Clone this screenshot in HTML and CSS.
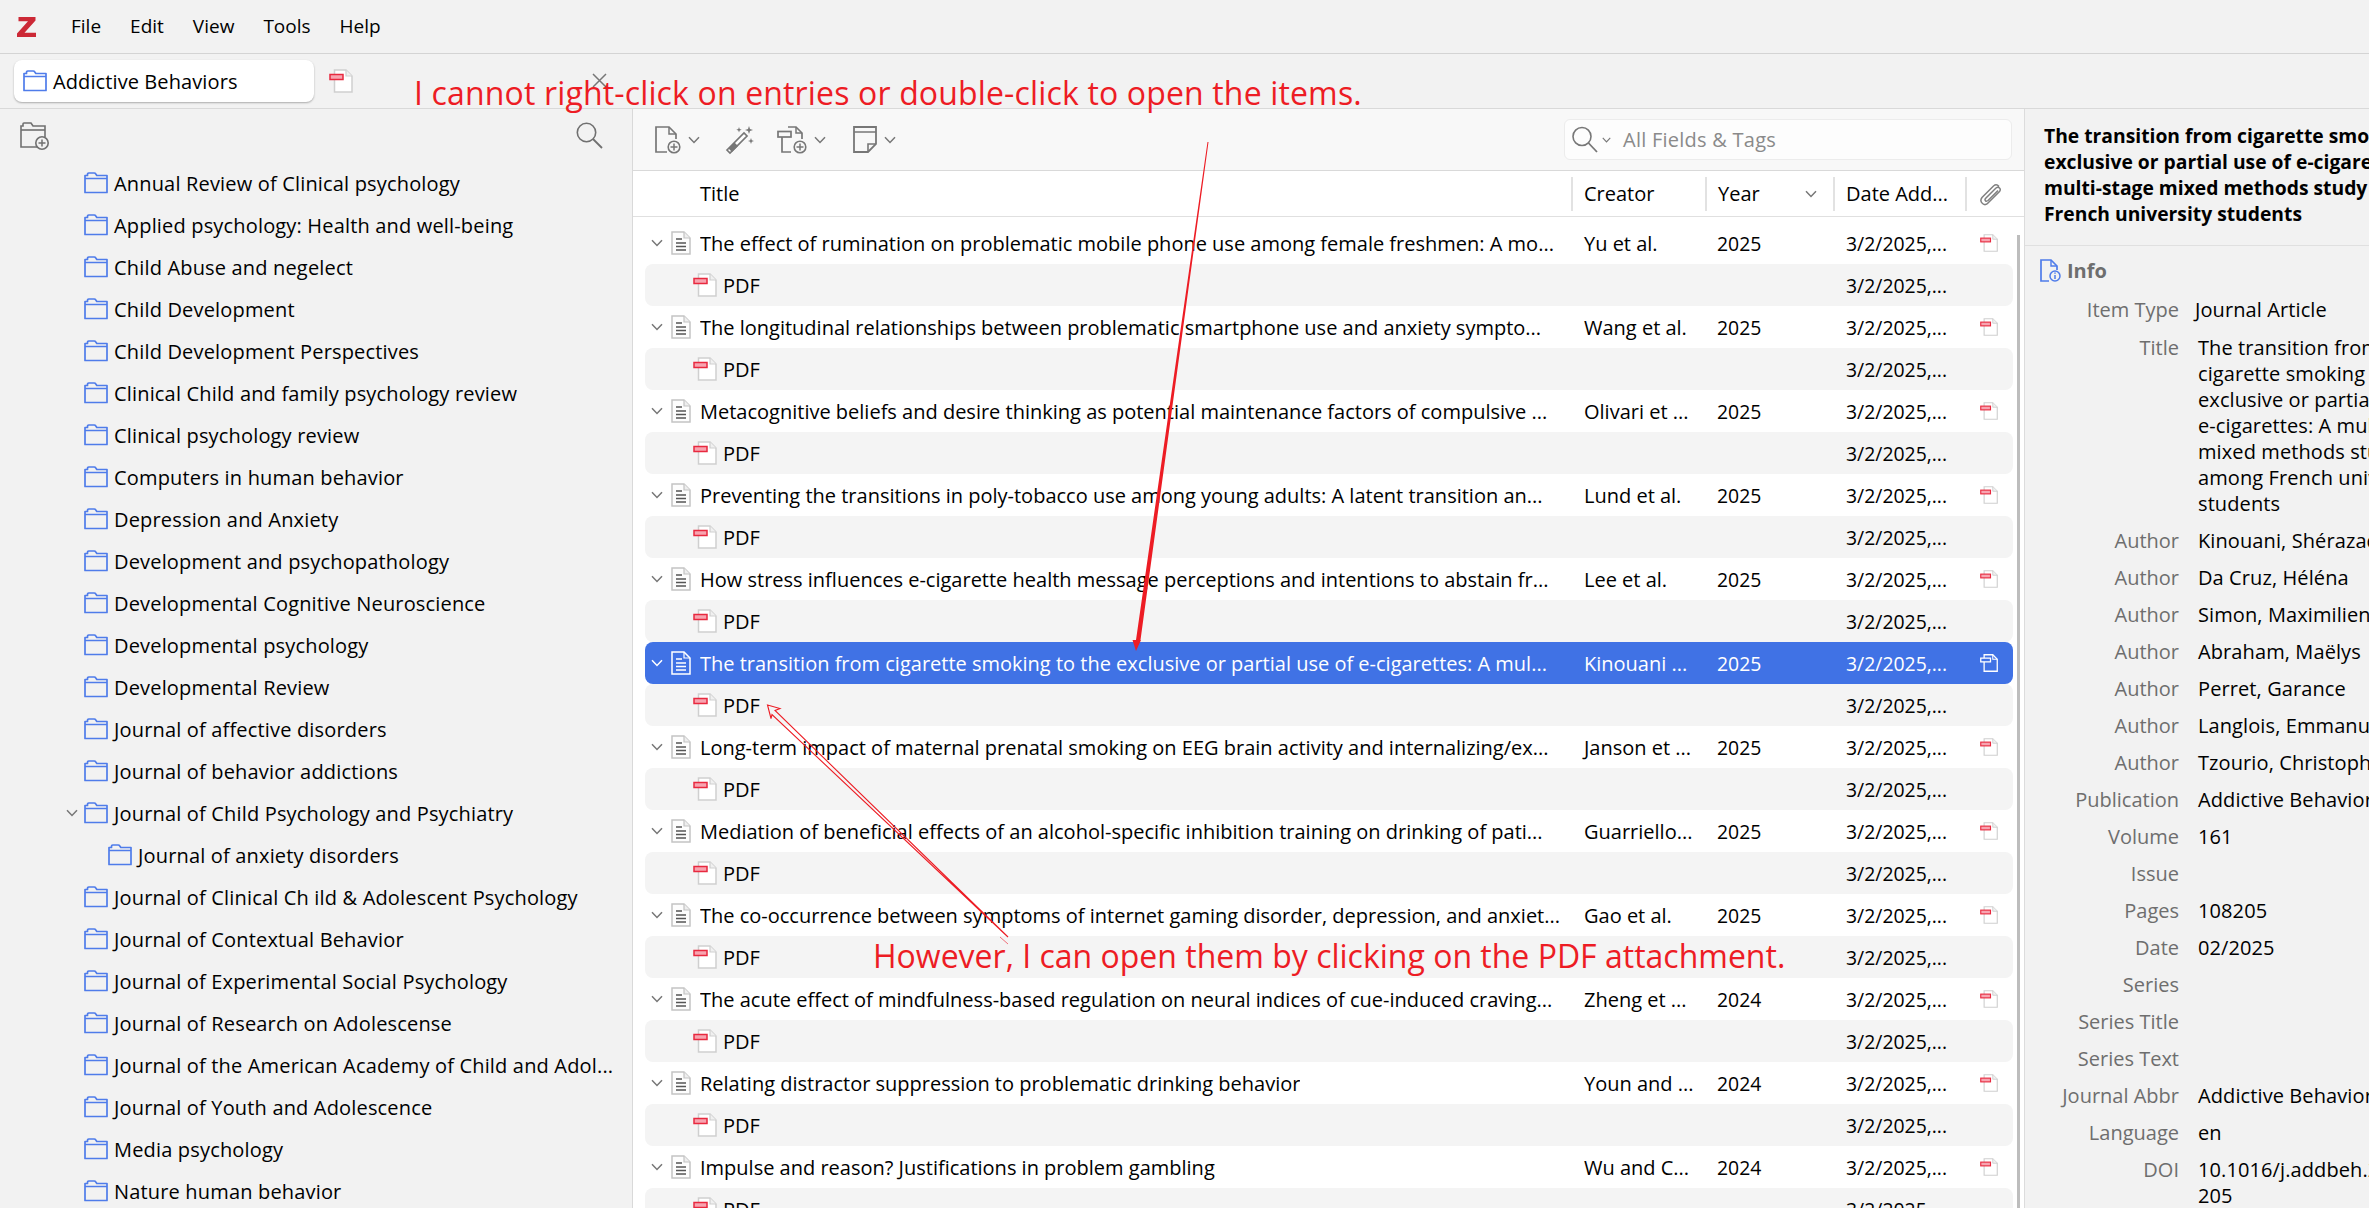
FILE: index.html
```html
<!DOCTYPE html>
<html lang="en">
<head>
<meta charset="utf-8">
<title>Zotero</title>
<link rel="stylesheet" href="styles.css">
</head>
<body>
<svg class="defs" width="0" height="0" aria-hidden="true">
  <symbol id="folder" viewBox="0 0 24 22"><path d="M1 20.5V3.5h2.5V2.2Q3.5 1 4.8 1h5.4Q11.2 1 11.8 2l1 1.500H23V20.500Z M1 6.500H23" fill="none" stroke="#4f7cea" stroke-width="1.700" stroke-linejoin="round"/></symbol>
  <symbol id="doc" viewBox="0 0 20 24"><path d="M1 1H13L19 7V23H1Z" fill="#fdfdfd" stroke="#c4c4c4" stroke-width="1.500"/><path d="M13 1V7H19" fill="#eee" stroke="#c4c4c4" stroke-width="1.200"/><path d="M5 8H11M5 12H15M5 15.500H15M5 19H15" stroke="#555" stroke-width="1.400"/></symbol>
  <symbol id="docw" viewBox="0 0 20 24"><path d="M1 1H13L19 7V23H1Z" fill="none" stroke="#fff" stroke-width="1.500"/><path d="M13 1V7H19" fill="none" stroke="#fff" stroke-width="1.200"/><path d="M5 8H11M5 12H15M5 15.500H15M5 19H15" stroke="#fff" stroke-width="1.400"/></symbol>
  <symbol id="pdf" viewBox="0 0 24 24"><path d="M5.500 1H17L23 7V23H5.500Z" fill="#fff" stroke="#cfcfcf" stroke-width="1.500"/><path d="M17 1V7H23" fill="#f0f0f0" stroke="#cfcfcf" stroke-width="1.200"/><rect x="1" y="5.500" width="13" height="5" fill="#f7a4b0" stroke="#e8293f" stroke-width="1.500"/></symbol>
  <symbol id="pdfw" viewBox="0 0 24 24"><path d="M5.500 1H17L23 7V23H5.500Z" fill="none" stroke="#fff" stroke-width="1.700"/><path d="M17 1V7H23" fill="none" stroke="#fff" stroke-width="1.400"/><rect x="1" y="5.500" width="13" height="5" fill="#4072e5" stroke="#fff" stroke-width="1.700"/></symbol>
  <symbol id="chev" viewBox="0 0 12 8"><path d="M1 1.200 6 6.500 11 1.200" fill="none" stroke="#777" stroke-width="1.500"/></symbol>
  <symbol id="chevw" viewBox="0 0 12 8"><path d="M1 1.200 6 6.500 11 1.200" fill="none" stroke="#fff" stroke-width="1.500"/></symbol>
</svg>

<header class="menubar">
  <svg class="logo" viewBox="0 0 19 20"><path d="M1.500 0H18.500V3.500L7.500 15.800H19V20H0V16.500L11 4.200H1.500Z" fill="#cc2936"/></svg>
  <nav class="menu"><span>File</span><span>Edit</span><span>View</span><span>Tools</span><span>Help</span></nav>
</header>

<div class="tabbar">
  <div class="tab"><svg class="i-folder"><use href="#folder"/></svg><span>Addictive Behaviors</span></div>
  <svg class="i-pdf"><use href="#pdf"/></svg>
</div>

<div class="workspace">
  <aside class="sidebar">
    <div class="side-tools">
      <svg class="i-tool" viewBox="0 0 29 28"><path d="M20 25H1V4h2V2q0-1 1-1h7l2 3h12v11" fill="none" stroke="#707070" stroke-width="1.600"/><path d="M1 8H25" stroke="#707070" stroke-width="1.600"/><circle cx="22" cy="21" r="6.200" fill="#f2f2f2" stroke="#707070" stroke-width="1.600"/><path d="M22 17.500v7M18.500 21h7" stroke="#707070" stroke-width="1.500"/></svg>
      <svg class="i-search" viewBox="0 0 27 27"><circle cx="10.500" cy="10.500" r="9.200" fill="none" stroke="#707070" stroke-width="1.600"/><path d="M17 17 26 26" stroke="#707070" stroke-width="1.800"/></svg>
    </div>
    <ul class="tree">
      <li class="node"><svg class="i-folder"><use href="#folder"/></svg><span>Annual Review of Clinical psychology</span></li>
      <li class="node"><svg class="i-folder"><use href="#folder"/></svg><span>Applied psychology: Health and well-being</span></li>
      <li class="node"><svg class="i-folder"><use href="#folder"/></svg><span>Child Abuse and negelect</span></li>
      <li class="node"><svg class="i-folder"><use href="#folder"/></svg><span>Child Development</span></li>
      <li class="node"><svg class="i-folder"><use href="#folder"/></svg><span>Child Development Perspectives</span></li>
      <li class="node"><svg class="i-folder"><use href="#folder"/></svg><span>Clinical Child and family psychology review</span></li>
      <li class="node"><svg class="i-folder"><use href="#folder"/></svg><span>Clinical psychology review</span></li>
      <li class="node"><svg class="i-folder"><use href="#folder"/></svg><span>Computers in human behavior</span></li>
      <li class="node"><svg class="i-folder"><use href="#folder"/></svg><span>Depression and Anxiety</span></li>
      <li class="node"><svg class="i-folder"><use href="#folder"/></svg><span>Development and psychopathology</span></li>
      <li class="node"><svg class="i-folder"><use href="#folder"/></svg><span>Developmental Cognitive Neuroscience</span></li>
      <li class="node"><svg class="i-folder"><use href="#folder"/></svg><span>Developmental psychology</span></li>
      <li class="node"><svg class="i-folder"><use href="#folder"/></svg><span>Developmental Review</span></li>
      <li class="node"><svg class="i-folder"><use href="#folder"/></svg><span>Journal of affective disorders</span></li>
      <li class="node"><svg class="i-folder"><use href="#folder"/></svg><span>Journal of behavior addictions</span></li>
      <li class="node open"><svg class="i-twisty"><use href="#chev"/></svg><svg class="i-folder"><use href="#folder"/></svg><span>Journal of Child Psychology and Psychiatry</span></li>
      <li class="node child"><svg class="i-folder"><use href="#folder"/></svg><span>Journal of anxiety disorders</span></li>
      <li class="node"><svg class="i-folder"><use href="#folder"/></svg><span>Journal of Clinical Ch ild &amp; Adolescent Psychology</span></li>
      <li class="node"><svg class="i-folder"><use href="#folder"/></svg><span>Journal of Contextual Behavior</span></li>
      <li class="node"><svg class="i-folder"><use href="#folder"/></svg><span>Journal of Experimental Social Psychology</span></li>
      <li class="node"><svg class="i-folder"><use href="#folder"/></svg><span>Journal of Research on Adolescense</span></li>
      <li class="node"><svg class="i-folder"><use href="#folder"/></svg><span>Journal of the American Academy of Child and Adol...</span></li>
      <li class="node"><svg class="i-folder"><use href="#folder"/></svg><span>Journal of Youth and Adolescence</span></li>
      <li class="node"><svg class="i-folder"><use href="#folder"/></svg><span>Media psychology</span></li>
      <li class="node"><svg class="i-folder"><use href="#folder"/></svg><span>Nature human behavior</span></li>
    </ul>
  </aside>

  <main class="items">
    <div class="toolbar">
      <svg class="i-tb" viewBox="0 0 26 28"><path d="M12 26H1V1H14L21 8V13" fill="none" stroke="#777" stroke-width="1.700"/><path d="M14 1V8H21" fill="none" stroke="#777" stroke-width="1.500"/><circle cx="19" cy="21" r="5.800" fill="#f8f8f8" stroke="#777" stroke-width="1.600"/><path d="M19 17.500v7M15.500 21h7" stroke="#777" stroke-width="1.500"/></svg>
      <svg class="i-chev"><use href="#chev"/></svg>
      <svg class="i-wand" viewBox="0 0 30 30"><path d="M2 25 19 8l3 3L5 28Z" fill="#fff" stroke="#777" stroke-width="1.700"/><path d="M3.500 23.500 7 27 13 21 9.500 17.500Z" fill="#777"/><path d="M24 1l1 3 3 1-3 1-1 3-1-3-3-1 3-1ZM14 2l.7 2 2 .7-2 .7-.7 2-.7-2-2-.7 2-.7ZM26 13l.8 2.200 2.200.8-2.200.8-.8 2.200-.8-2.200-2.200-.8 2.200-.8Z" fill="#777"/></svg>
      <svg class="i-tb attach" viewBox="0 0 30 28"><path d="M14 26H5V9M11 1H19L25 7V13" fill="none" stroke="#777" stroke-width="1.700"/><path d="M19 1V7H25" fill="none" stroke="#777" stroke-width="1.500"/><rect x="1" y="5.500" width="13" height="5.500" fill="#f8f8f8" stroke="#777" stroke-width="1.700"/><circle cx="23" cy="21" r="5.800" fill="#f8f8f8" stroke="#777" stroke-width="1.600"/><path d="M23 17.500v7M19.500 21h7" stroke="#777" stroke-width="1.500"/></svg>
      <svg class="i-chev"><use href="#chev"/></svg>
      <svg class="i-tb note" viewBox="0 0 24 27"><path d="M1 1H23V18L15 26H1Z" fill="none" stroke="#777" stroke-width="1.800"/><path d="M1 6H23M15 26V18H23" fill="none" stroke="#777" stroke-width="1.600"/></svg>
      <svg class="i-chev"><use href="#chev"/></svg>
      <div class="searchbox">
        <svg class="i-lens" viewBox="0 0 26 27"><circle cx="10" cy="10.500" r="9" fill="none" stroke="#777" stroke-width="1.600"/><path d="M16.500 17 25 26" stroke="#777" stroke-width="1.800"/></svg>
        <svg class="i-mini"><use href="#chev"/></svg>
        <span>All Fields &amp; Tags</span>
      </div>
    </div>

    <div class="thead">
      <div class="th th-title">Title</div>
      <div class="th th-creator">Creator</div>
      <div class="th th-year">Year<svg class="i-chev sort"><use href="#chev"/></svg></div>
      <div class="th th-date">Date Add...</div>
      <div class="th th-clip"><svg class="i-clip" viewBox="0 0 24 24"><path d="M20 4.500Q17.500 1.500 14.500 4L3 15.500Q.5 19 3.500 21.500T9 21L20.500 9.500Q22 7.500 20.500 6T17 6L6.500 16.500Q5.500 18 6.500 18.800T9 18.500L19 8.500" fill="none" stroke="#808080" stroke-width="1.500"/></svg></div>
    </div>

    <div class="rows">
      <div class="row"><div class="c-title"><svg class="i-twisty"><use href="#chev"/></svg><svg class="i-doc"><use href="#doc"/></svg><span class="clip">The effect of rumination on problematic mobile phone use among female freshmen: A mo...</span></div><div>Yu et al.</div><div>2025</div><div>3/2/2025,...</div><svg class="i-att"><use href="#pdf"/></svg></div>
      <div class="row sub"><div class="c-title"><svg class="i-pdf"><use href="#pdf"/></svg><span>PDF</span></div><div></div><div></div><div>3/2/2025,...</div></div>
      <div class="row"><div class="c-title"><svg class="i-twisty"><use href="#chev"/></svg><svg class="i-doc"><use href="#doc"/></svg><span class="clip">The longitudinal relationships between problematic smartphone use and anxiety sympto...</span></div><div>Wang et al.</div><div>2025</div><div>3/2/2025,...</div><svg class="i-att"><use href="#pdf"/></svg></div>
      <div class="row sub"><div class="c-title"><svg class="i-pdf"><use href="#pdf"/></svg><span>PDF</span></div><div></div><div></div><div>3/2/2025,...</div></div>
      <div class="row"><div class="c-title"><svg class="i-twisty"><use href="#chev"/></svg><svg class="i-doc"><use href="#doc"/></svg><span class="clip">Metacognitive beliefs and desire thinking as potential maintenance factors of compulsive ...</span></div><div>Olivari et ...</div><div>2025</div><div>3/2/2025,...</div><svg class="i-att"><use href="#pdf"/></svg></div>
      <div class="row sub"><div class="c-title"><svg class="i-pdf"><use href="#pdf"/></svg><span>PDF</span></div><div></div><div></div><div>3/2/2025,...</div></div>
      <div class="row"><div class="c-title"><svg class="i-twisty"><use href="#chev"/></svg><svg class="i-doc"><use href="#doc"/></svg><span class="clip">Preventing the transitions in poly-tobacco use among young adults: A latent transition an...</span></div><div>Lund et al.</div><div>2025</div><div>3/2/2025,...</div><svg class="i-att"><use href="#pdf"/></svg></div>
      <div class="row sub"><div class="c-title"><svg class="i-pdf"><use href="#pdf"/></svg><span>PDF</span></div><div></div><div></div><div>3/2/2025,...</div></div>
      <div class="row"><div class="c-title"><svg class="i-twisty"><use href="#chev"/></svg><svg class="i-doc"><use href="#doc"/></svg><span class="clip">How stress influences e-cigarette health message perceptions and intentions to abstain fr...</span></div><div>Lee et al.</div><div>2025</div><div>3/2/2025,...</div><svg class="i-att"><use href="#pdf"/></svg></div>
      <div class="row sub"><div class="c-title"><svg class="i-pdf"><use href="#pdf"/></svg><span>PDF</span></div><div></div><div></div><div>3/2/2025,...</div></div>
      <div class="row selected"><div class="c-title"><svg class="i-twisty"><use href="#chevw"/></svg><svg class="i-doc"><use href="#docw"/></svg><span class="clip">The transition from cigarette smoking to the exclusive or partial use of e-cigarettes: A mul...</span></div><div>Kinouani ...</div><div>2025</div><div>3/2/2025,...</div><svg class="i-att"><use href="#pdfw"/></svg></div>
      <div class="row sub"><div class="c-title"><svg class="i-pdf"><use href="#pdf"/></svg><span>PDF</span></div><div></div><div></div><div>3/2/2025,...</div></div>
      <div class="row"><div class="c-title"><svg class="i-twisty"><use href="#chev"/></svg><svg class="i-doc"><use href="#doc"/></svg><span class="clip">Long-term impact of maternal prenatal smoking on EEG brain activity and internalizing/ex...</span></div><div>Janson et ...</div><div>2025</div><div>3/2/2025,...</div><svg class="i-att"><use href="#pdf"/></svg></div>
      <div class="row sub"><div class="c-title"><svg class="i-pdf"><use href="#pdf"/></svg><span>PDF</span></div><div></div><div></div><div>3/2/2025,...</div></div>
      <div class="row"><div class="c-title"><svg class="i-twisty"><use href="#chev"/></svg><svg class="i-doc"><use href="#doc"/></svg><span class="clip">Mediation of beneficial effects of an alcohol-specific inhibition training on drinking of pati...</span></div><div>Guarriello...</div><div>2025</div><div>3/2/2025,...</div><svg class="i-att"><use href="#pdf"/></svg></div>
      <div class="row sub"><div class="c-title"><svg class="i-pdf"><use href="#pdf"/></svg><span>PDF</span></div><div></div><div></div><div>3/2/2025,...</div></div>
      <div class="row"><div class="c-title"><svg class="i-twisty"><use href="#chev"/></svg><svg class="i-doc"><use href="#doc"/></svg><span class="clip">The co-occurrence between symptoms of internet gaming disorder, depression, and anxiet...</span></div><div>Gao et al.</div><div>2025</div><div>3/2/2025,...</div><svg class="i-att"><use href="#pdf"/></svg></div>
      <div class="row sub"><div class="c-title"><svg class="i-pdf"><use href="#pdf"/></svg><span>PDF</span></div><div></div><div></div><div>3/2/2025,...</div></div>
      <div class="row"><div class="c-title"><svg class="i-twisty"><use href="#chev"/></svg><svg class="i-doc"><use href="#doc"/></svg><span class="clip">The acute effect of mindfulness-based regulation on neural indices of cue-induced craving...</span></div><div>Zheng et ...</div><div>2024</div><div>3/2/2025,...</div><svg class="i-att"><use href="#pdf"/></svg></div>
      <div class="row sub"><div class="c-title"><svg class="i-pdf"><use href="#pdf"/></svg><span>PDF</span></div><div></div><div></div><div>3/2/2025,...</div></div>
      <div class="row"><div class="c-title"><svg class="i-twisty"><use href="#chev"/></svg><svg class="i-doc"><use href="#doc"/></svg><span class="clip">Relating distractor suppression to problematic drinking behavior</span></div><div>Youn and ...</div><div>2024</div><div>3/2/2025,...</div><svg class="i-att"><use href="#pdf"/></svg></div>
      <div class="row sub"><div class="c-title"><svg class="i-pdf"><use href="#pdf"/></svg><span>PDF</span></div><div></div><div></div><div>3/2/2025,...</div></div>
      <div class="row"><div class="c-title"><svg class="i-twisty"><use href="#chev"/></svg><svg class="i-doc"><use href="#doc"/></svg><span class="clip">Impulse and reason? Justifications in problem gambling</span></div><div>Wu and C...</div><div>2024</div><div>3/2/2025,...</div><svg class="i-att"><use href="#pdf"/></svg></div>
      <div class="row sub"><div class="c-title"><svg class="i-pdf"><use href="#pdf"/></svg><span>PDF</span></div><div></div><div></div><div>3/2/2025,...</div></div>
    </div>
    <div class="scrollbar"></div>
  </main>

  <aside class="panel">
    <h1 class="ptitle">The transition from cigarette smoking to the<br>exclusive or partial use of e-cigarettes: A<br>multi-stage mixed methods study among<br>French university students</h1>
    <div class="pbody">
      <h2 class="phead"><svg class="i-info" viewBox="0 0 21 23"><path d="M9 22H1V1H11L17 7V11" fill="none" stroke="#4f7cea" stroke-width="1.700"/><path d="M11 1V7H17" fill="none" stroke="#4f7cea" stroke-width="1.400"/><circle cx="15" cy="17" r="5" fill="#f2f2f2" stroke="#4f7cea" stroke-width="1.500"/><path d="M15 16v4M15 13.500v1.300" stroke="#4f7cea" stroke-width="1.500"/></svg>Info</h2>
      <dl class="fields">
        <dt class="first">Item Type</dt><dd class="first menuval">Journal Article</dd>
        <dt>Title</dt><dd><span class="ln">The transition from the</span><span class="ln">cigarette smoking to the</span><span class="ln">exclusive or partial use of</span><span class="ln">e-cigarettes: A multi-stage</span><span class="ln">mixed methods study</span><span class="ln">among French university</span><span class="ln">students</span></dd>
        <dt>Author</dt><dd>Kinouani, Shérazade</dd>
        <dt>Author</dt><dd>Da Cruz, Héléna</dd>
        <dt>Author</dt><dd>Simon, Maximilien</dd>
        <dt>Author</dt><dd>Abraham, Maëlys</dd>
        <dt>Author</dt><dd>Perret, Garance</dd>
        <dt>Author</dt><dd>Langlois, Emmanuel</dd>
        <dt>Author</dt><dd>Tzourio, Christophe</dd>
        <dt>Publication</dt><dd>Addictive Behaviors</dd>
        <dt>Volume</dt><dd>161</dd>
        <dt>Issue</dt><dd></dd>
        <dt>Pages</dt><dd>108205</dd>
        <dt>Date</dt><dd>02/2025</dd>
        <dt>Series</dt><dd></dd>
        <dt>Series Title</dt><dd></dd>
        <dt>Series Text</dt><dd></dd>
        <dt>Journal Abbr</dt><dd>Addictive Behaviors</dd>
        <dt>Language</dt><dd>en</dd>
        <dt>DOI</dt><dd><span class="ln">10.1016/j.addbeh.2024.108</span><span class="ln">205</span></dd>
      </dl>
    </div>
  </aside>
</div>

<svg class="overlay" viewBox="0 0 2369 1208">
  <path class="x-mark" d="M593 74 606 87M606 74 593 87"/>
  <polygon class="solid" points="1207.500,142 1208.500,142 1140.500,640 1141,640 1136,651 1132.500,640 1136,640"/>
  <polygon class="hollow" points="767.500,705 780,708.500 775,710.500 1008,937 772,714.500 771,718.500"/>
  <path class="frag" d="M1000 937 1008 944"/>
</svg>
<p class="note-a">I cannot right-click on entries or double-click to open the items.</p>
<p class="note-b">However, I can open them by clicking on the PDF attachment.</p>
</body>
</html>
```
FILE: styles.css
```css
* { box-sizing: border-box; }
html, body { margin: 0; height: 100%; }
body {
  width: 2369px;
  height: 1208px;
  overflow: hidden;
  position: relative;
  display: flex;
  flex-direction: column;
  background: #f2f2f2;
  color: #000;
  font-family: "Open Sans", "Noto Sans", sans-serif;
  font-size: 20px;
}
.defs { position: absolute; }
svg { display: block; flex: none; }

.menubar {
  height: 54px;
  flex: none;
  display: flex;
  align-items: center;
  padding-left: 17px;
  border-bottom: 1px solid #d4d4d4;
}
.logo { width: 19px; height: 20px; }
.menu { display: flex; gap: 29px; margin: -2px 0 0 35px; font-size: 19px; }

.tabbar {
  height: 55px;
  flex: none;
  display: flex;
  align-items: center;
  padding-left: 14px;
  border-bottom: 1px solid #d9d9d9;
}
.tab {
  width: 300px;
  height: 42px;
  display: flex;
  align-items: center;
  gap: 6px;
  padding-left: 9px;
  background: #fff;
  border-radius: 8px;
  box-shadow: 0 1px 2px rgba(0,0,0,.3);
  letter-spacing: .1px;
}
.tabbar > .i-pdf { margin-left: 15px; }
.i-folder { width: 24px; height: 22px; }
.i-pdf { width: 24px; height: 24px; }

.workspace { flex: 1; display: flex; min-height: 0; }

.sidebar { width: 633px; flex: none; border-right: 1px solid #d9d9d9; overflow: hidden; }
.side-tools {
  height: 53px;
  display: flex;
  justify-content: space-between;
  align-items: center;
  padding: 0 29px 0 20px;
}
.i-tool { width: 29px; height: 28px; }
.i-search { width: 27px; height: 27px; }
.tree { list-style: none; margin: 0; padding: 0; }
.node { height: 42px; display: flex; align-items: center; gap: 6px; padding-left: 84px; white-space: nowrap; letter-spacing: .17px; }
.node.open { padding-left: 66px; }
.node.child { padding-left: 108px; }
.i-twisty { width: 12px; height: 8px; }

.items { width: 1391px; flex: none; position: relative; background: #fff; overflow: hidden; }
.toolbar {
  height: 62px;
  display: flex;
  align-items: center;
  padding-left: 22px;
  background: #f8f8f8;
  border-bottom: 1px solid #d9d9d9;
}
.i-tb { width: 26px; height: 28px; }
.i-tb.attach { width: 30px; height: 28px; margin-left: 22px; }
.i-tb.note { width: 24px; height: 27px; margin-left: 27px; }
.i-chev { width: 12px; height: 8px; margin-left: 7px; }
.i-wand { width: 30px; height: 30px; margin-left: 25px; }
.searchbox {
  width: 448px;
  height: 41px;
  margin-left: auto;
  margin-right: 12px;
  display: flex;
  align-items: center;
  padding-left: 7px;
  background: #fdfdfd;
  border: 1px solid #ececec;
  border-radius: 6px;
  color: #8a8a8a;
  letter-spacing: .25px;
}
.i-lens { width: 26px; height: 27px; }
.i-mini { width: 9px; height: 6px; margin-left: 4px; margin-right: 12px; }

.thead {
  height: 46px;
  display: grid;
  grid-template-columns: 938px 134px 128px 132px 59px;
  align-items: center;
  border-bottom: 1px solid #e0e0e0;
}
.th { height: 34px; display: flex; align-items: center; border-left: 2px solid #e2e2e2; padding-left: 11px; }
.th-title { border-left: 0; padding-left: 67px; }
.sort { margin-left: auto; margin-right: 16px; }
.th-clip { padding-left: 12px; }
.i-clip { width: 24px; height: 24px; }

.rows { padding: 5px 11px 0 12px; }
.row {
  height: 42px;
  display: grid;
  grid-template-columns: 939px 133px 129px 134px 1fr;
  align-items: center;
  white-space: nowrap;
}
.row > div:nth-child(3), .row > div:nth-child(4) { font-size: 19.400px; }
.row.sub { background: #f4f4f4; border-radius: 8px; }
.row.selected { background: #4072e5; color: #fff; border-radius: 8px; }
.c-title { display: flex; align-items: center; padding-left: 6px; min-width: 0; }
.c-title .i-doc { margin-left: 8px; margin-right: 9px; }
.i-doc { width: 20px; height: 24px; }
.clip { overflow: hidden; }
.sub .c-title { padding-left: 48px; }
.sub .c-title .i-pdf { margin-right: 6px; }
.i-att { width: 18px; height: 18px; }
.scrollbar { position: absolute; left: 1384px; top: 126px; bottom: 0; width: 3px; background: #bdbdbd; }

.panel { flex: 1; min-width: 0; border-left: 1px solid #dcdcdc; overflow: hidden; }
.ptitle {
  margin: 0;
  height: 137px;
  padding: 14px 0 0 19px;
  font-size: 19.300px;
  line-height: 26px;
  font-weight: 700;
  white-space: nowrap;
  border-bottom: 1px solid #e0e0e0;
}
.pbody { padding-top: 12px; }
.phead {
  margin: 0 0 8px;
  height: 25px;
  display: flex;
  align-items: center;
  gap: 6px;
  padding-left: 15px;
  font-size: 20px;
  font-weight: 700;
  color: #6e6e6e;
}
.i-info { width: 21px; height: 23px; }
.fields {
  margin: 0;
  display: grid;
  grid-template-columns: 154px 1fr;
  column-gap: 19px;
  line-height: 26px;
  white-space: nowrap;
}
dt { text-align: right; color: #6e6e6e; padding: 5.500px 0; }
dd { margin: 0; padding: 5.500px 0; min-width: 0; letter-spacing: .1px; }
dt.first, dd.first { padding-bottom: 6.500px; }
.menuval { margin-left: -3px; }
.ln { display: block; }

.overlay { position: absolute; inset: 0; width: 2369px; height: 1208px; pointer-events: none; }
.solid { fill: #ed1c24; }
.hollow { fill: none; stroke: #ed1c24; stroke-width: 1.100; }
.frag { fill: none; stroke: #f0707a; stroke-width: 1; }
.x-mark { fill: none; stroke: #777; stroke-width: 1.500; }
.note-a, .note-b {
  position: absolute;
  margin: 0;
  color: #ed1c24;
  font-size: 32px;
  line-height: 42px;
  white-space: nowrap;
}
.note-a { left: 414px; top: 72px; letter-spacing: .15px; }
.note-b { left: 873px; top: 935px; }
```
